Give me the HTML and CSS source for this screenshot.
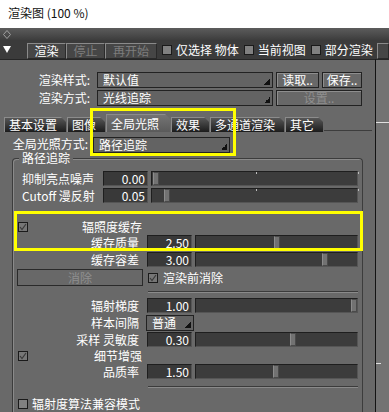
FILE: index.html
```html
<!DOCTYPE html>
<html>
<head>
  <meta charset="utf-8">
  <title>渲染图</title>
  <meta name="viewport" content="width=device-width, initial-scale=1.0">
  <link rel="stylesheet" href="styles.css">
</head>
<body>
  <div class="titlebar">渲染图 (100 %)</div>

  <div class="grip">
    <svg width="8" height="9" viewBox="0 0 8 9"><path d="M4 0.5 L7.5 4.5 L4 8.5 L0.5 4.5 Z" fill="none" stroke="#a0a0a0"/></svg>
  </div>

  <div class="toolbar">
    <svg class="collapse" width="8" height="7" viewBox="0 0 8 7"><polygon points="0,0 8,0 4,7" fill="#fff"/></svg>
    <div class="tool-btns">
      <button class="tbtn">渲染</button>
      <button class="tbtn" disabled>停止</button>
      <button class="tbtn wide" disabled>再开始</button>
    </div>
    <label class="tchk"><span class="box"></span>仅选择 物体</label>
    <label class="tchk"><span class="box"></span>当前视图</label>
    <label class="tchk"><span class="box"></span>部分渲染</label>
    <button class="tbtn cut"></button>
  </div>

  <div class="main">
    <div class="panel">
      <div class="preset">
        <span class="lbl">渲染样式:</span>
        <div class="drop">默认值</div>
        <button class="btn">读取..</button>
        <button class="btn">保存..</button>
        <span class="lbl">渲染方式:</span>
        <div class="drop">光线追踪</div>
        <button class="btn span2" disabled>设置..</button>
      </div>

      <div class="tabs">
        <span class="tab">基本设置</span>
        <span class="tab">图像</span>
        <span class="tab active">全局光照</span>
        <span class="tab">效果</span>
        <span class="tab">多通道渲染</span>
        <span class="tab">其它</span>
        <span class="tab-line"></span>
      </div>

      <div class="gi">
        <span class="lbl">全局光照方式:</span>
        <div class="drop">路径追踪</div>
      </div>

      <div class="group">
        <div class="legend">路径追踪</div>
        <div class="rows">
          <div class="row top">
            <span class="lbl">抑制亮点噪声</span>
            <span class="num">0.00</span>
            <span class="slider"><i class="tick t1"></i><i class="tick t2"></i><i class="knob" style="left:1px"></i></span>
          </div>
          <div class="row top">
            <span class="lbl">Cutoff 漫反射</span>
            <span class="num">0.05</span>
            <span class="slider"><i class="tick t1"></i><i class="tick t2"></i><i class="knob" style="left:12px"></i></span>
          </div>

          <div class="chk-row gap-big">
            <span class="box checked"><svg width="8" height="8" viewBox="0 0 8 8"><polyline points="1,4 3,6.5 7,1" fill="none" stroke="#3a3a3a" stroke-width="1.2"/></svg></span>
            <span>辐照度缓存</span>
          </div>
          <div class="row">
            <span class="lbl">缓存质量</span>
            <span class="num">2.50</span>
            <span class="slider"><i class="knob" style="left:78px"></i></span>
          </div>
          <div class="row">
            <span class="lbl">缓存容差</span>
            <span class="num">3.00</span>
            <span class="slider"><i class="knob" style="left:126px"></i></span>
          </div>
          <div class="clear-row">
            <button class="btn" disabled>消除</button>
            <label class="inline-chk">
              <span class="box checked"><svg width="8" height="8" viewBox="0 0 8 8"><polyline points="1,4 3,6.5 7,1" fill="none" stroke="#3a3a3a" stroke-width="1.2"/></svg></span>
              渲染前消除
            </label>
          </div>

          <div class="sep"></div>

          <div class="row after-sep">
            <span class="lbl">辐射梯度</span>
            <span class="num">1.00</span>
            <span class="slider"><i class="knob" style="left:155px"></i></span>
          </div>
          <div class="row">
            <span class="lbl">样本间隔</span>
            <div class="drop small">普通</div>
          </div>
          <div class="row">
            <span class="lbl">采样 灵敏度</span>
            <span class="num">0.30</span>
            <span class="slider"><i class="knob" style="left:94px"></i></span>
          </div>
          <div class="chk-row">
            <span class="box checked"><svg width="8" height="8" viewBox="0 0 8 8"><polyline points="1,4 3,6.5 7,1" fill="none" stroke="#3a3a3a" stroke-width="1.2"/></svg></span>
            <span>细节增强</span>
          </div>
          <div class="row">
            <span class="lbl">品质率</span>
            <span class="num">1.50</span>
            <span class="slider"><i class="knob" style="left:77px"></i></span>
          </div>

          <div class="sep"></div>

          <label class="inline-chk bottom">
            <span class="box"></span>
            辐射度算法兼容模式
          </label>
        </div>
      </div>
    </div>

    <div class="scroll">
      <div class="scroll-line"></div>
      <div class="scroll-dash"></div>
    </div>
  </div>

  <!-- yellow annotation frames -->
  <div class="mark mark-gi"></div>
  <div class="mark mark-cache"></div>
</body>
</html>
```

FILE: styles.css
```css
* {
  box-sizing: border-box;
}

body {
  margin: 0;
  width: 389px;
  height: 412px;
  overflow: hidden;
  position: relative;
  background: #fff;
  font-family: "Noto Sans CJK SC", "Noto Sans", sans-serif;
  font-size: 12px;
  color: #fff;
}

.titlebar {
  height: 28px;
  padding-left: 8px;
  line-height: 26px;
  color: #111;
  background: #fff;
}

.grip {
  height: 12px;
  display: flex;
  align-items: center;
  padding-left: 3px;
  background: linear-gradient(#5c5c5c, #3d3d3d);
}

/* toolbar */
.toolbar {
  height: 19px;
  display: flex;
  align-items: flex-end;
  background: #3b3b3b;
  overflow: hidden;
}

.collapse {
  flex-shrink: 0;
  margin: 0 16px 6px 3px;
}

.tool-btns {
  display: flex;
  flex-shrink: 0;
}

.tbtn {
  width: 39px;
  height: 16px;
  padding: 0;
  font: inherit;
  line-height: 14px;
  color: #fff;
  background: #464646;
  border: 1px solid;
  border-color: #8a8a8a #2a2a2a #2a2a2a #8a8a8a;
}

.tbtn:disabled {
  color: #7d7d7d;
}

.tbtn.wide {
  width: 52px;
}

.tchk {
  height: 19px;
  display: flex;
  align-items: center;
  gap: 4px;
  margin-left: 5px;
  flex-shrink: 0;
  white-space: nowrap;
}

.tbtn.cut {
  width: 12px;
  margin-left: auto;
  flex-shrink: 0;
}

.box {
  width: 10px;
  height: 10px;
  flex-shrink: 0;
  display: inline-flex;
  align-items: center;
  justify-content: center;
  border: 1px solid #1a1a1a;
  background: #808080;
}

.box.checked {
  background: #767676;
}

/* main panel */
.main {
  display: flex;
  height: 353px;
}

.panel {
  width: 376px;
  flex-shrink: 0;
  display: flex;
  flex-direction: column;
  padding-top: 12px;
  background: #696969;
  border-top: 1px solid #262626;
  border-right: 1px solid #141414;
}

.scroll {
  flex: 1;
  background: #737373;
  border-top: 1px solid #262626;
}

.scroll-line {
  margin-top: 62px;
  height: 1px;
  background: #e0e0e0;
}

.scroll-dash {
  margin-top: 240px;
  width: 5px;
  height: 1px;
  background: #e0e0e0;
}

.lbl {
  text-align: right;
  white-space: nowrap;
}

.preset {
  display: grid;
  grid-template-columns: 94px 176px 43px 40px;
  grid-auto-rows: 16px;
  column-gap: 3px;
  row-gap: 2px;
}

.preset .lbl {
  padding-right: 4px;
  line-height: 16px;
}

.drop {
  padding-left: 5px;
  line-height: 14px;
  white-space: nowrap;
  border: 1px solid #222;
  background: linear-gradient(135deg, transparent 50%, #111 50%) right 2px bottom 2px / 6px 6px no-repeat, #636363;
}

.btn {
  padding: 0;
  font: inherit;
  line-height: 14px;
  color: #fff;
  background: #686868;
  border: 1px solid #222;
  box-shadow: inset 1px 1px 0 #8e8e8e;
}

.btn:disabled {
  color: #8f8f8f;
}

.span2 {
  grid-column: span 2;
}

/* tabs */
.tabs {
  display: flex;
  align-items: flex-end;
  height: 18px;
  margin-top: 8px;
  padding: 0 3px 0 4px;
}

.tab {
  height: 15px;
  margin-right: 1px;
  padding: 0 9px 0 4px;
  line-height: 14px;
  white-space: nowrap;
  background: linear-gradient(#565656, #1c1c1c);
  border-top: 1px solid #8c8c8c;
  border-left: 1px solid #8c8c8c;
  clip-path: polygon(0 0, calc(100% - 5px) 0, 100% 5px, 100% 100%, 0 100%);
}

.tab.active {
  height: 18px;
  padding-right: 11px;
  line-height: 17px;
  background: linear-gradient(#747474, #5a5a5a);
}

.tab-line {
  flex: 1;
  height: 1px;
  margin-bottom: 1px;
  background: #3d3d3d;
}

.gi {
  display: grid;
  grid-template-columns: 90px 137px;
  column-gap: 3px;
  height: 15px;
  margin-top: 5px;
}

.gi .lbl {
  height: 14px;
  padding-right: 2px;
  line-height: 14px;
}

/* group box */
.group {
  flex: 1;
  width: 351px;
  margin: 6px 0 0 12px;
  padding: 0 4px;
  border: 1px solid #3c3c3c;
  border-bottom: none;
  border-radius: 4px 4px 0 0;
  box-shadow: inset 1px 1px 0 #8a8a8a;
}

.legend {
  width: fit-content;
  height: 12px;
  margin: -7px 0 0 2px;
  padding: 0 3px;
  line-height: 12px;
  background: #696969;
}

.rows {
  display: flex;
  flex-direction: column;
  gap: 2px;
  margin-top: 7px;
}

.row {
  height: 15px;
  display: grid;
  grid-template-columns: 127px 45px 1fr;
  column-gap: 3px;
}

.row .lbl {
  padding-right: 5px;
  line-height: 15px;
}

.row.top {
  grid-template-columns: 83px 45px 1fr;
}

.row.top .lbl {
  text-align: left;
  padding-left: 5px;
}

.num {
  padding-right: 2px;
  text-align: right;
  line-height: 13px;
  background: #393939;
  border: 1px solid #1e1e1e;
  border-right-color: #555;
  border-bottom-color: #555;
}

.slider {
  position: relative;
  background: #3c3c3c;
  border: 1px solid #1e1e1e;
  border-right-color: #555;
  border-bottom-color: #555;
}

.knob {
  position: absolute;
  top: 0;
  bottom: 0;
  width: 6px;
  background: #727272;
  border: 1px solid #4a4a4a;
  border-left-color: #8c8c8c;
}

.tick {
  position: absolute;
  top: 0;
  width: 1px;
  height: 2px;
  background: #bdbdbd;
}

.tick.t1 {
  left: 104px;
}

.tick.t2 {
  left: 206px;
}

.drop.small {
  width: 48px;
  margin-left: -1px;
}

.chk-row {
  width: 125px;
  height: 13px;
  display: flex;
  align-items: center;
  justify-content: space-between;
  padding-left: 1px;
  line-height: 13px;
}

.gap-big {
  margin-top: 15px;
}

.clear-row {
  height: 15px;
  display: grid;
  grid-template-columns: 126px 1fr;
  column-gap: 5px;
}

.clear-row .btn {
  box-shadow: none;
  border-color: #2a2a2a;
}

.inline-chk {
  display: flex;
  align-items: center;
  gap: 5px;
  white-space: nowrap;
}

.inline-chk.bottom {
  height: 13px;
  gap: 4px;
  padding-left: 1px;
  margin-top: 7px;
}

.sep {
  height: 2px;
  margin: 5px 0 0 131px;
  border-top: 1px solid #3b3b3b;
  border-bottom: 1px solid #8a8a8a;
}

.after-sep {
  margin-top: 3px;
}

/* annotation frames */
.mark {
  position: absolute;
  border: 3px solid #ffff00;
}

.mark-gi {
  left: 90px;
  top: 108px;
  width: 146px;
  height: 48px;
}

.mark-cache {
  left: 14px;
  top: 211px;
  width: 349px;
  height: 40px;
}
```
